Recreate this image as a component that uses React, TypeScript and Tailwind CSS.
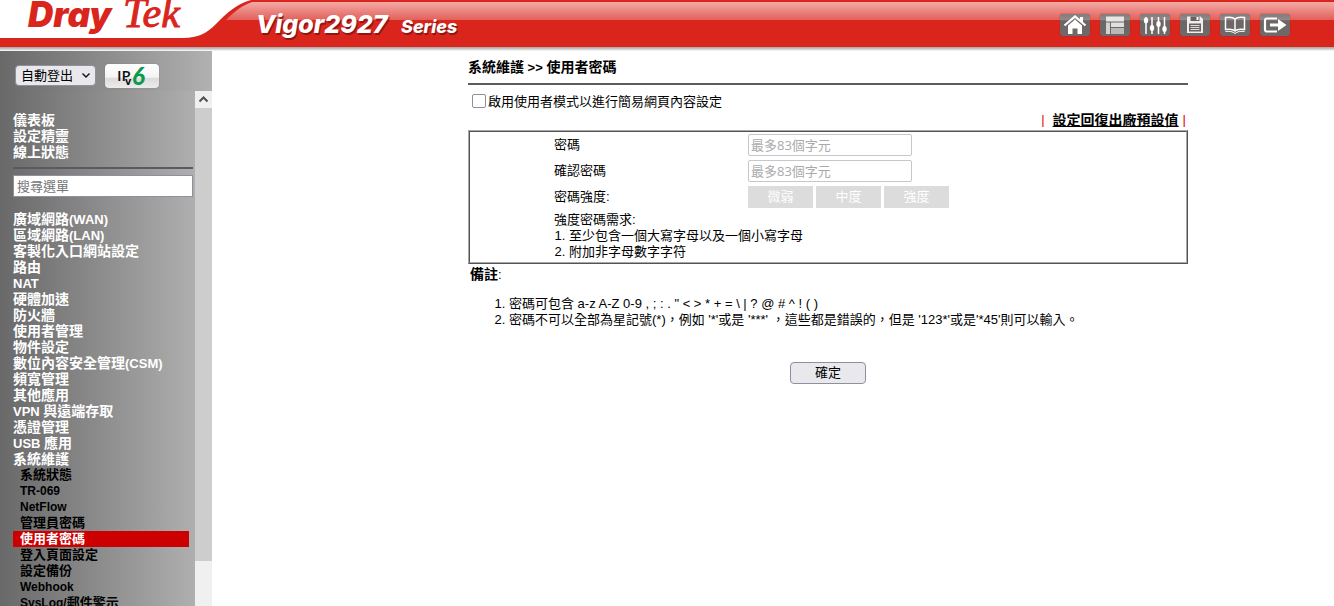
import type { ReactNode } from "react";

const topLinks = ["儀表板", "設定精靈", "線上狀態"];

const menu = [
  "廣域網路(WAN)",
  "區域網路(LAN)",
  "客製化入口網站設定",
  "路由",
  "NAT",
  "硬體加速",
  "防火牆",
  "使用者管理",
  "物件設定",
  "數位內容安全管理(CSM)",
  "頻寬管理",
  "其他應用",
  "VPN 與遠端存取",
  "憑證管理",
  "USB 應用",
  "系統維護",
];

const submenu = [
  "系統狀態",
  "TR-069",
  "NetFlow",
  "管理員密碼",
  "使用者密碼",
  "登入頁面設定",
  "設定備份",
  "Webhook",
  "SysLog/郵件警示",
];

const activeItem = "使用者密碼";

// Latin runs are set one size smaller than the Chinese ones
function MixedText({ text, latin = "text-[13px]" }: { text: string; latin?: string }) {
  return text.split(/([\x20-\x7e]+)/).map((part, i) =>
    /^[\x20-\x7e]/.test(part) ? (
      <span key={i} className={latin}>
        {part}
      </span>
    ) : (
      part
    ),
  );
}

function ToolButton({ label, children }: { label: string; children: ReactNode }) {
  return (
    <button
      type="button"
      aria-label={label}
      className="h-[22px] w-[30px] rounded-[3px] bg-[linear-gradient(#857b7a,#938988_28%,#6c6665_30%,#6f6a69)] shadow-[0_0_1px_#7a1c18]"
    >
      <svg viewBox="0 0 30 22" className="block h-full w-full" fill="none" stroke="#fff">
        {children}
      </svg>
    </button>
  );
}

function Header() {
  return (
    <header className="flex h-[51px] shrink-0 items-start bg-[linear-gradient(#da251d_0_2px,#f4aaa5_2px,#e2605a_20px,#da251d_20px_47px,#a9a3a4_47px,#c9c9c9_49px,#fff_51px)]">
      <svg
        viewBox="0 0 480 51"
        className="h-[51px] w-[480px] shrink-0"
        role="img"
        aria-label="DrayTek Vigor2927 Series"
      >
        <path d="M0 0H262C246 2 236 10 226 20H262V38H0Z" fill="#da251d" />
        <path d="M0 0H251C236 4 226 14 216 24C207 33 198 38 183 38H0Z" fill="#fff" />
        <text x="28" y="27" fill="#da251d" fontFamily="Inter" fontWeight="900" fontStyle="italic" fontSize="35">
          Dray
        </text>
        <text
          x="123"
          y="27"
          fill="#da251d"
          stroke="#da251d"
          strokeWidth="1"
          fontFamily="Liberation Serif"
          fontStyle="italic"
          fontSize="42"
        >
          Tek
        </text>
        <g fontFamily="Inter" fontWeight="800" fontStyle="italic">
          <g fill="#7c1410" opacity="0.8">
            <text x="257" y="35" fontSize="25">
              Vigor2927
            </text>
            <text x="402" y="35" fontSize="18">
              Series
            </text>
          </g>
          <g fill="#fff">
            <text x="256" y="33" fontSize="25">
              Vigor2927
            </text>
            <text x="401" y="33" fontSize="18">
              Series
            </text>
          </g>
        </g>
      </svg>

      <div className="ml-auto flex gap-[10px] pt-[14px] pr-[44px]">
        <ToolButton label="首頁">
          <path d="M4.500 11.500L15 2.500L25.500 11.500" strokeWidth="2.200" />
          <path d="M20 3h3v6l-3-3z" fill="#fff" stroke="none" />
          <path d="M8 11.500L15 5.500L22 11.500V20H17.500V14.500H12.500V20H8Z" fill="#fff" stroke="none" />
        </ToolButton>
        <ToolButton label="配置">
          <path d="M6 2.500H24V7.500H6Z" fill="#e6e6e6" stroke="none" />
          <path d="M6 8.500H10V20H6Z" fill="#d2d2d2" stroke="none" />
          <path d="M11 8.500H24V13H11Z" fill="#e0e0e0" stroke="none" />
          <path d="M11 14H24V20H11Z" fill="#b8b8b8" stroke="none" />
        </ToolButton>
        <ToolButton label="設定">
          <path d="M6 3V20M12 3V20M18.500 3V20M24.500 3V20" strokeWidth="1.500" />
          <g fill="#fff" stroke="none">
            <ellipse cx="6" cy="6.500" rx="2.200" ry="3" />
            <ellipse cx="12" cy="14" rx="2.200" ry="3" />
            <ellipse cx="18.500" cy="10" rx="2.200" ry="3" />
            <ellipse cx="24.500" cy="15" rx="2.200" ry="3" />
          </g>
        </ToolButton>
        <ToolButton label="儲存">
          <path d="M7 2.500H20.500L23 5V19H7Z" fill="#eee" stroke="none" />
          <path d="M10.500 2.500H19.500V7H10.500Z" fill="#6a6260" stroke="none" />
          <path d="M16.500 3V6H18.500V3Z" fill="#fff" stroke="none" />
          <path d="M9 9.500H21V17.500H9Z" fill="#6a6260" stroke="none" />
          <path d="M10.500 11.500H19.500M10.500 13.500H19.500M10.500 15.500H19.500" stroke="#ddd" />
        </ToolButton>
        <ToolButton label="說明">
          <path
            d="M15 5C13 3 9 3 5.500 3.500V15.500C9 15 13 15 15 17C17 15 21 15 24.500 15.500V3.500C21 3 17 3 15 5ZM15 5V17"
            strokeWidth="1.500"
          />
          <path d="M5.500 17.500C9 17 13 17.500 15 19.500C17 17.500 21 17 24.500 17.500" />
        </ToolButton>
        <ToolButton label="登出">
          <path d="M17 4.500H7Q5 4.500 5 6.500V15.500Q5 17.500 7 17.500H17" strokeWidth="2.200" />
          <path d="M10 9.500H18V5L26.500 11L18 17V12.500H10Z" fill="#fff" stroke="none" />
        </ToolButton>
      </div>
    </header>
  );
}

function Sidebar() {
  return (
    <aside className="flex w-[212px] shrink-0 flex-col bg-linear-to-r from-[#696969] to-[#b1b1b1] font-bold">
      <div className="flex h-10 shrink-0 items-center gap-[9px] pt-[9px] pl-[15px]">
        <div className="relative">
          <select
            aria-label="自動登出"
            className="block h-[21px] w-[81px] appearance-none rounded-[4px] border border-[#8f8f9d] bg-[#e9e9ed] pl-[5px] text-[13px] leading-[18px] font-normal text-black"
          >
            <option>自動登出</option>
          </select>
          <svg
            viewBox="0 0 8 5"
            className="pointer-events-none absolute top-[8px] right-[6px] h-[5px] w-2"
            fill="none"
            stroke="#111"
            strokeWidth="1.400"
          >
            <path d="M0.500 0.500L4 4L7.500 0.500" />
          </svg>
        </div>
        <button
          type="button"
          aria-label="IPv6"
          className="h-6 w-[54px] rounded-[4px] bg-[linear-gradient(#fff,#f4f4f4_55%,#dcdcdc_60%,#ececec)] shadow-[0_0_1px_#666]"
        >
          <svg viewBox="0 0 54 24" className="block h-full w-full">
            <text x="12" y="17" fontFamily="Open Sans" fontWeight="600" fontSize="15" fill="#111">
              IP
            </text>
            <text x="20" y="21" fontFamily="Open Sans" fontWeight="700" fontSize="11" fill="#111">
              v
            </text>
            <text x="27" y="21" fontFamily="Lato" fontWeight="900" fontStyle="italic" fontSize="24" fill="#0c9a4a">
              6
            </text>
          </svg>
        </button>
      </div>

      <div className="flex min-h-0 flex-1">
        <nav className="min-w-0 flex-1 overflow-hidden bg-linear-to-r from-[#696969] to-[#afafaf] pt-[21px] pl-[13px] leading-4 whitespace-nowrap text-white">
          <ul className="text-[14px]">
            {topLinks.map((item) => (
              <li key={item} className="h-4">
                <a href="#">{item}</a>
              </li>
            ))}
          </ul>
          <hr className="mt-[7px] mr-[2px] border-t-2 border-[#5a5a5a]" />
          <input
            type="text"
            aria-label="搜尋選單"
            placeholder="搜尋選單"
            className="mt-[6px] block h-[22px] w-[180px] border border-[#8f8f9d] bg-white pl-[3px] text-[13px] font-normal text-black placeholder:text-[#757575]"
          />
          <ul className="mt-[14px] text-[14px]">
            {menu.map((item) => (
              <li key={item} className="h-4">
                <a href="#">
                  <MixedText text={item} />
                </a>
              </li>
            ))}
          </ul>
          <ul className="mr-[6px] text-[13px] text-black">
            {submenu.map((item) => (
              <li
                key={item}
                className={item === activeItem ? "h-4 bg-[#cc0000] pl-[7px] text-white" : "h-4 pl-[7px]"}
              >
                <a href="#">
                  <MixedText text={item} latin="text-[12px]" />
                </a>
              </li>
            ))}
          </ul>
        </nav>

        {/* Scrollbar */}
        <div className="flex w-[17px] shrink-0 flex-col bg-[#f0f0f0]" aria-hidden="true">
          <svg viewBox="0 0 17 17" className="h-[17px] w-[17px]" fill="none" stroke="#505050" strokeWidth="2">
            <path d="M4.500 10.500L8.500 6.500L12.500 10.500" />
          </svg>
          <div className="h-[88%] bg-[#cdcdcd]" />
        </div>
      </div>
    </aside>
  );
}

function PasswordRow({ id, label }: { id: string; label: string }) {
  return (
    <>
      <label htmlFor={id} className="leading-[22px]">
        {label}
      </label>
      <input
        id={id}
        type="password"
        disabled
        placeholder="最多83個字元"
        className="h-[22px] w-[164px] rounded-[2px] border border-[#c6c6cd] bg-white pl-[2px] font-['Open_Sans','Noto_Sans_CJK_TC',sans-serif] placeholder:text-[#aaa]"
      />
    </>
  );
}

function UserPassword() {
  return (
    <main className="flex min-w-0 flex-1 justify-center pl-[110px]">
      <form className="w-[720px] pt-2">
        <h1 className="text-[14px] leading-4 font-bold">
          <MixedText text="系統維護 >> 使用者密碼" />
        </h1>
        <hr className="mt-[7px] border-t-2 border-[#5c5c5c]" />

        <label className="mt-[9px] flex h-4 items-center gap-[2px] pl-1 leading-4">
          <input
            type="checkbox"
            className="mb-[2px] h-[14px] w-[14px] appearance-none rounded-[2px] border border-[#8f8f9d] bg-white"
          />
          啟用使用者模式以進行簡易網頁內容設定
        </label>

        <div className="mt-[2px] mr-[2px] flex justify-end gap-1 text-[14px] leading-4">
          <span className="pr-1 text-[13px] text-[#e00000]">|</span>
          <a href="#" className="font-bold underline">
            設定回復出廠預設值
          </a>
          <span className="text-[13px] text-[#e00000]">|</span>
        </div>

        <section className="mt-[2px] border-2 border-[#a8a8a8] px-[84px] py-[2px] [border-style:ridge]">
          <div className="grid grid-cols-[194px_1fr] gap-y-1">
            <PasswordRow id="password" label="密碼" />
            <PasswordRow id="confirm" label="確認密碼" />
            <span className="leading-[22px]">密碼強度:</span>
            <div className="flex gap-[3px] text-center leading-[22px] text-white">
              <span className="w-[65px] bg-[#dcdcdc]">微弱</span>
              <span className="w-[65px] bg-[#dcdcdc]">中度</span>
              <span className="w-[65px] bg-[#dcdcdc]">強度</span>
            </div>
          </div>
          <p className="mt-1 leading-4">強度密碼需求:</p>
          <ol className="list-decimal pl-[15px] leading-4">
            <li>至少包含一個大寫字母以及一個小寫字母</li>
            <li>附加非字母數字字符</li>
          </ol>
        </section>

        <p className="mt-[2px] pl-[2px] leading-4">
          <b className="text-[14px]">備註</b>:
        </p>
        <ol className="mt-[13px] list-decimal pl-[41px] leading-4">
          <li>{'密碼可包含 a-z A-Z 0-9 , ; : . " < > * + = \\ | ? @ # ^ ! ( )'}</li>
          <li>{"密碼不可以全部為星記號(*)，例如 '*'或是 '***' ，這些都是錯誤的，但是 '123*'或是'*45'則可以輸入。"}</li>
        </ol>

        <div className="mt-[34px] flex justify-center">
          <button
            type="submit"
            className="h-[22px] w-[76px] rounded-[4px] border border-[#8f8f9d] bg-[#e9e9ed] leading-5"
          >
            確定
          </button>
        </div>
      </form>
    </main>
  );
}

export default function App() {
  return (
    <div
      lang="zh-TW"
      className="flex h-screen flex-col overflow-hidden bg-white font-['Liberation_Sans','Noto_Sans_CJK_TC',sans-serif] text-[13px] text-black"
    >
      <Header />
      <div className="flex min-h-0 flex-1">
        <Sidebar />
        <UserPassword />
      </div>
    </div>
  );
}
